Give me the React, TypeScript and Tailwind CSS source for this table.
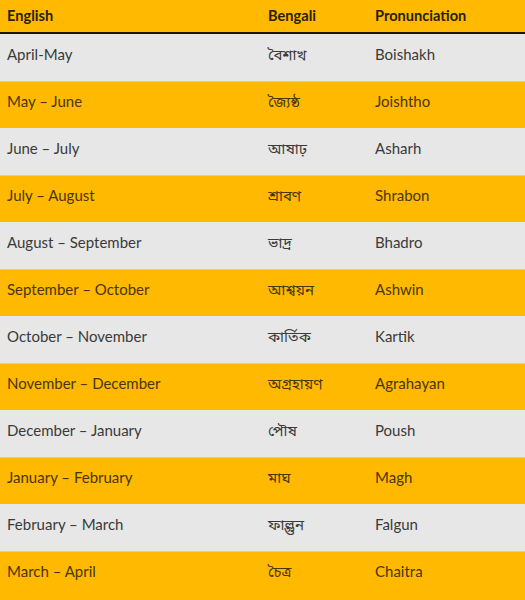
import React from "react";

const rows: [string, string, string][] = [
  ["April-May", "বৈশাখ", "Boishakh"],
  ["May – June", "জ্যৈষ্ঠ", "Joishtho"],
  ["June – July", "আষাঢ়", "Asharh"],
  ["July – August", "শ্রাবণ", "Shrabon"],
  ["August – September", "ভাদ্র", "Bhadro"],
  ["September – October", "আশ্বয়ন", "Ashwin"],
  ["October – November", "কার্তিক", "Kartik"],
  ["November – December", "অগ্রহায়ণ", "Agrahayan"],
  ["December – January", "পৌষ", "Poush"],
  ["January – February", "মাঘ", "Magh"],
  ["February – March", "ফাল্গুন", "Falgun"],
  ["March – April", "চৈত্র", "Chaitra"],
];

export default function App() {
  return (
    <div
      className="w-[525px] h-[600px] overflow-hidden bg-[#ffb900]"
      style={{ fontFamily: "Lato, 'Noto Sans Bengali', 'Lohit Bengali', 'Noto Sans', sans-serif" }}
    >
      <div className="grid grid-cols-[261px_107px_1fr] h-[34px] items-center border-b-2 border-[#1c1400] text-[14.6px] font-bold text-[#2a1e00]">
        <div className="pl-[7px]">English</div>
        <div className="pl-[7px]">Bengali</div>
        <div className="pl-[7px]">Pronunciation</div>
      </div>
      {rows.map((r, i) => {
        const yellow = i % 2 === 1;
        return (
          <div
            key={i}
            className={
              yellow
                ? "grid grid-cols-[261px_107px_1fr] h-[47px] pt-[9px] bg-[#ffb900] border-t border-[#f6cd66] text-[15px] text-[#4a3600]"
                : "grid grid-cols-[261px_107px_1fr] h-[47px] pt-[10px] bg-[#e7e7e7] text-[15px] text-[#3a3a3a]"
            }
          >
            <div className="pl-[7px] leading-[20px]">{r[0]}</div>
            <div className="pl-[7px] leading-[20px]">{r[1]}</div>
            <div className="pl-[7px] leading-[20px]">{r[2]}</div>
          </div>
        );
      })}
    </div>
  );
}
